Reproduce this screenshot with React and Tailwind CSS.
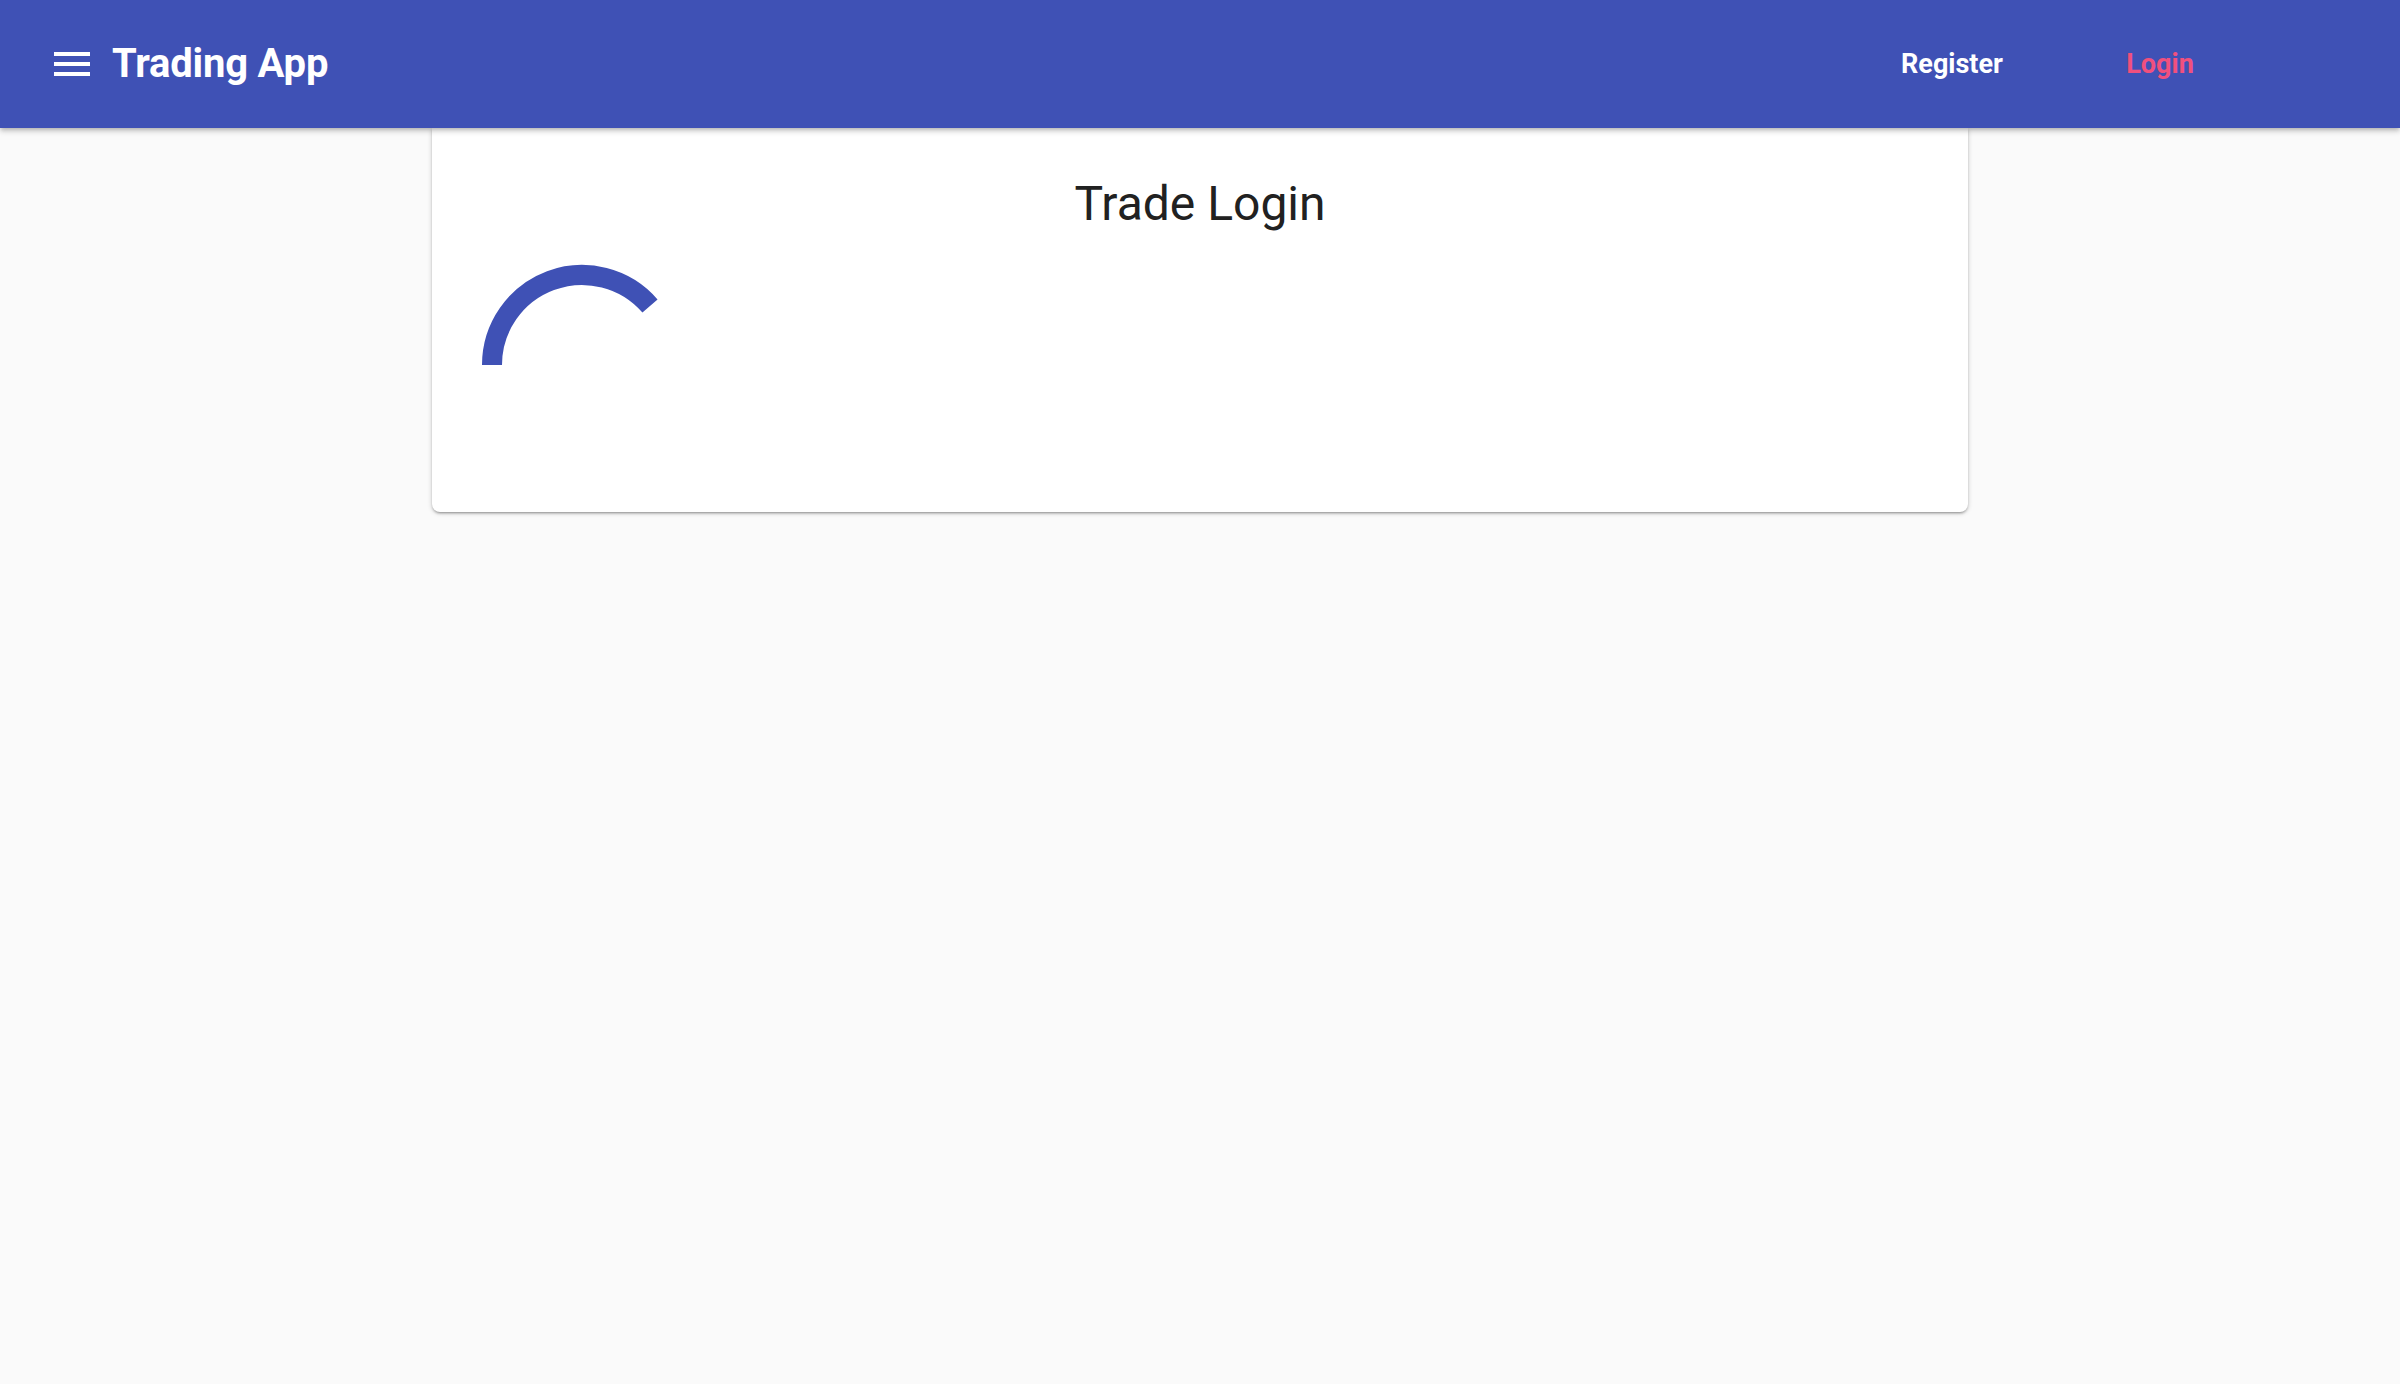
import React from 'react';

const Spinner = () => (
  <svg width="206" height="206" viewBox="0 0 206 206" className="block">
    {/* arc from 9 o'clock round to about 1:30 */}
    <path
      d="M 13 103 A 90 90 0 0 1 171 44"
      fill="none"
      stroke="#3f51b5"
      strokeWidth="20"
    />
  </svg>
);

export default function App() {
  return (
    <div className="min-h-screen w-full bg-[#fafafa] font-['Roboto',_'Liberation_Sans',_sans-serif]">
      <header className="relative z-10 flex h-[128px] items-center bg-[#3f51b5] pl-[48px] pr-[176px] shadow-[0_2px_4px_-1px_rgba(0,0,0,0.2),0_4px_5px_0_rgba(0,0,0,0.14)]">
        <button className="flex h-[48px] w-[48px] items-center justify-center">
          <svg width="48" height="48" viewBox="0 0 24 24" fill="#ffffff">
            <path d="M3 18h18v-2H3v2zm0-5h18v-2H3v2zm0-7v2h18V6H3z" />
          </svg>
        </button>
        <div className="ml-[16px] flex-1 text-[40px] font-bold leading-[64px] tracking-[-0.2px] text-white">
          Trading App
        </div>
        <div className="flex items-center gap-[61px]">
          <button className="h-[72px] w-[166px] text-[27px] font-bold text-white">Register</button>
          <button className="h-[72px] w-[128px] text-[27px] font-bold text-[#f0507e]">Login</button>
        </div>
      </header>

      <main className="flex justify-center">
        <div className="w-[1536px] rounded-b-lg bg-white px-[47px] pt-[44px] pb-[44px] shadow-[0_2px_2px_0_rgba(0,0,0,0.14),0_3px_1px_-2px_rgba(0,0,0,0.12),0_1px_5px_0_rgba(0,0,0,0.2)]">
          <h1 className="text-center text-[48px] font-normal leading-[64px] text-[#212121]">Trade Login</h1>
          <div className="mt-[26px]">
            <Spinner />
          </div>
        </div>
      </main>
    </div>
  );
}
